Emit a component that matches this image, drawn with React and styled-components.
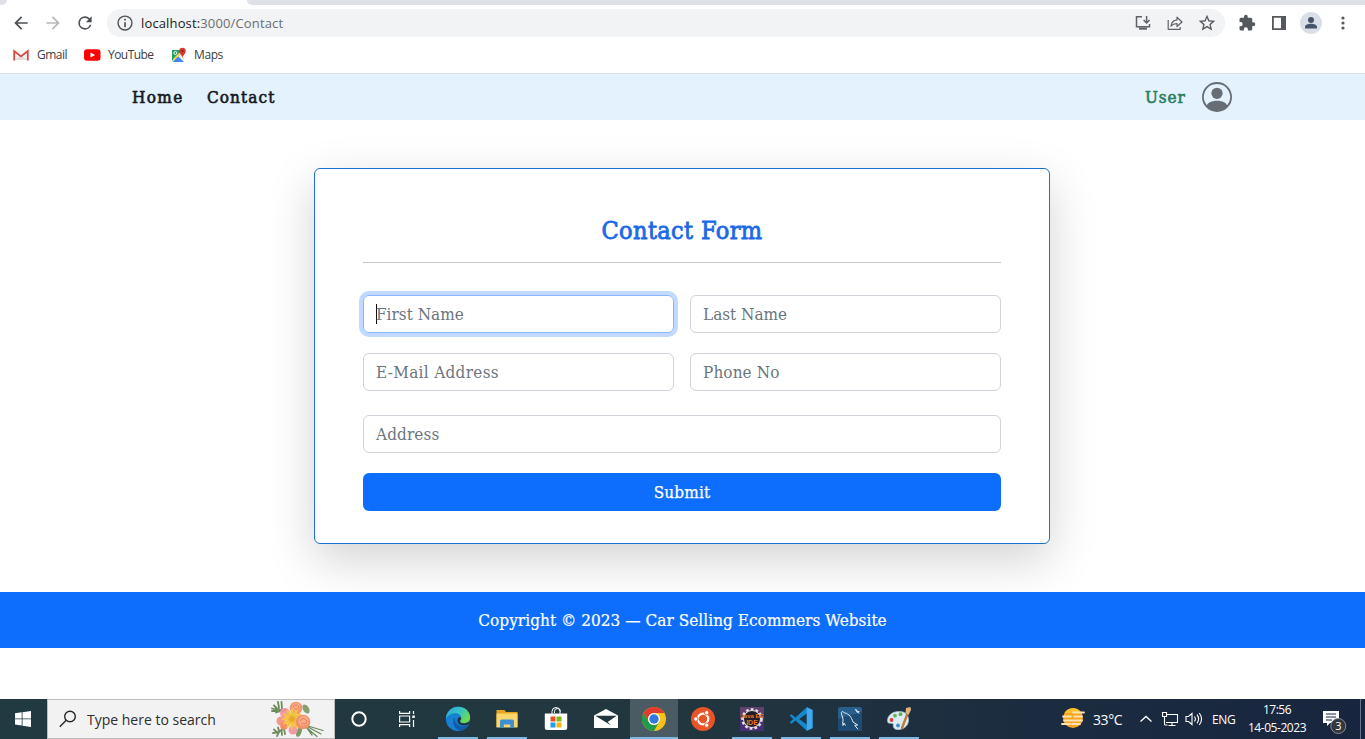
import React from "react";
import styled, { createGlobalStyle } from "styled-components";

const Global = createGlobalStyle`
  *, *::before, *::after { box-sizing: border-box; }
  html, body { margin: 0; height: 100%; overflow: hidden; background: #fff; }
  svg { display: block; flex: none; }
`;

const serif = `"DejaVu Serif Condensed", "DejaVu Serif", serif`;
const sans = `"Open Sans", "Noto Sans", sans-serif`;

/* ---------- layout ---------- */
const Screen = styled.div`
  width: 1365px;
  height: 739px;
  display: flex;
  flex-direction: column;
  overflow: hidden;
  font-family: ${sans};
`;
const Spacer = styled.div`flex: 1;`;

/* Fixes a text run to a given width box so neighbours keep their place. */
const Label = styled.span`
  display: block;
  flex: none;
  white-space: nowrap;
  width: ${(p) => (p.$w ? `${p.$w}px` : "auto")};
  font-size: ${(p) => p.$size || 12}px;
  letter-spacing: ${(p) => p.$track || 0}px;
`;

/* ---------- browser chrome ---------- */
const TabStrip = styled.div`
  height: 5px;
  display: flex;
  justify-content: space-between;
  background: #fff;
`;
const TabLeft = styled.div`
  width: 7px;
  height: 5px;
  background: #dee1e6;
  border-bottom-right-radius: 6px;
`;
const TabRight = styled.div`
  width: 1118px;
  height: 5px;
  background: #dee1e6;
  border-bottom-left-radius: 6px;
`;
const Toolbar = styled.div`
  height: 36px;
  display: flex;
  align-items: center;
  padding-left: 11px;
`;
const NavButtons = styled.div`
  display: flex;
  gap: 12px;
  width: 96px;
`;
const AddressBar = styled.div`
  width: 1118px;
  height: 28px;
  border-radius: 14px;
  background: #f1f3f4;
  display: flex;
  align-items: center;
  padding: 0 8px 0 8px;
  color: #6a6e72;
  b { font-weight: 400; color: #202124; }
`;
const UrlText = styled(Label)`margin-left: 6px;`;
const BarIcons = styled.div`
  display: flex;
  gap: 12px;
`;
const ChromeActions = styled.div`
  display: flex;
  align-items: center;
  gap: 10px;
  padding-left: 13px;
  svg:first-child { margin-right: 2px; }
`;
const Bookmarks = styled.div`
  height: 32px;
  display: flex;
  align-items: center;
  padding: 0 0 4px 12px;
  color: #3c4043;
`;
const Bookmark = styled.div`
  display: flex;
  align-items: center;
  gap: 7px;
  width: ${(p) => p.$w}px;
  ${Label} { padding-bottom: 2px; }
`;

/* ---------- web page ---------- */
const NavBar = styled.nav`
  height: 47px;
  background: #e3f2fd;
  border-top: 1px solid #d3dde6;
  display: flex;
  align-items: center;
  padding: 0 133px 0 132px;
  font-family: ${serif};
  color: #16191c;
`;
const NavLink = styled(Label)`
  color: ${(p) => p.$color || "inherit"};
  -webkit-text-stroke: 0.6px currentColor;
`;
const Main = styled.main`
  height: 472px;
  padding-top: 48px;
  display: flex;
  justify-content: center;
  align-items: flex-start;
  padding-right: 1px;
`;
const Card = styled.form`
  width: 736px;
  height: 376px;
  border: 1px solid #1d6fd0;
  border-radius: 6px;
  background: #fff;
  box-shadow: 0 16px 48px rgba(0, 0, 0, 0.175);
  padding: 42px 48px 32px;
  display: flex;
  flex-direction: column;
`;
const Title = styled.h1`
  margin: 0;
  height: 52px;
  line-height: 39px;
  border-bottom: 1px solid #c8c8c8;
  text-align: center;
  font-family: ${serif};
  font-weight: 400;
  font-size: 25px;
  letter-spacing: 0.4px;
  color: #1c69e8;
  -webkit-text-stroke: 0.8px currentColor;
`;
const Fields = styled.div`
  display: grid;
  grid-template-columns: 311px 311px;
  gap: 20px 16px;
  margin-top: 32px;
`;
const Field = styled.div`
  height: 38px;
  border: 1px solid ${(p) => (p.$focus ? "#86b7fe" : "#ced4da")};
  border-radius: 6px;
  box-shadow: ${(p) => (p.$focus ? "0 0 0 4px #c2daff" : "none")};
  padding: 0 12px;
  display: flex;
  align-items: center;
  font-family: ${serif};
  color: #6c757d;
`;
const Caret = styled.i`
  width: 1px;
  height: 20px;
  background: #111;
  margin-right: -1px;
`;
const Wide = styled.div`margin: 24px 0 20px;`;
const Submit = styled.button`
  height: 38px;
  border: 0;
  border-radius: 6px;
  background: #0d6efd;
  color: #fff;
  display: flex;
  align-items: center;
  justify-content: center;
  font-family: ${serif};
  -webkit-text-stroke: 0.25px currentColor;
`;
const Footer = styled.footer`
  height: 56px;
  background: #0d6efd;
  color: #fff;
  display: flex;
  align-items: center;
  justify-content: center;
  font-family: ${serif};
  -webkit-text-stroke: 0.2px currentColor;
  position: relative;
`;

/* ---------- taskbar ---------- */
const Taskbar = styled.div`
  height: 40px;
  display: flex;
  align-items: stretch;
  background: linear-gradient(90deg, #213a42 0, #22363f 50%, #1b2b40 78%, #17263e 100%);
  color: #fff;
`;
const Start = styled.div`
  width: 47px;
  display: flex;
  align-items: center;
  justify-content: center;
  padding-right: 1px;
`;
const Search = styled.div`
  width: 288px;
  background: #f2f2f2;
  border: 1px solid #bdbdbd;
  display: flex;
  align-items: center;
  padding-left: 11px;
  color: #2e2e2e;
`;
const SearchText = styled(Label)`margin-left: 10px;`;
const AppSlot = styled.div`
  width: ${(p) => p.$w || 49}px;
  display: flex;
  align-items: center;
  justify-content: center;
  background: ${(p) => (p.$active ? "#4a5b63" : "transparent")};
  box-shadow: ${(p) => (p.$active ? "inset 0 -2px #7ab8e8" : "none")};
`;
const AppInner = styled.div`
  width: 40px;
  height: 40px;
  display: flex;
  align-items: center;
  justify-content: center;
  box-shadow: ${(p) => (p.$open ? "inset 0 -2px #7ab8e8" : "none")};
`;
const Tray = styled.div`
  display: flex;
  align-items: center;
  width: 305px;
`;
const TrayItem = styled.div`
  width: ${(p) => p.$w}px;
  display: flex;
  flex: none;
`;
const Clock = styled.div`
  width: 78px;
  margin-right: 6px;
  display: flex;
  flex-direction: column;
  align-items: center;
  line-height: 18px;
`;
const Peek = styled.div`
  height: 40px;
  border-left: 1px solid #68758a;
`;

/* ---------- icons ---------- */
const Svg = ({ w = 20, h, vb = "0 0 24 24", children, ...r }) => (
  <svg width={w} height={h || w} viewBox={vb} fill="none" {...r}>{children}</svg>
);
const Arrow = ({ flip, color }) => (
  <Svg><g transform={flip ? "translate(24 0) scale(-1 1)" : undefined}>
    <path fill={color} d="M20 11H7.83l5.59-5.59L12 4l-8 8 8 8 1.41-1.41L7.83 13H20z" />
  </g></Svg>
);
const Reload = () => (
  <Svg><path fill="#4d5156" d="M17.65 6.35A7.95 7.95 0 0 0 12 4a8 8 0 1 0 7.73 10h-2.08A6 6 0 1 1 12 6c1.66 0 3.14.69 4.22 1.78L13 11h7V4z" /></Svg>
);
const Info = () => (
  <Svg><circle cx="12" cy="12" r="8.3" stroke="#505459" strokeWidth="1.7" /><path fill="#505459" d="M11 7h2v2h-2zM11 11h2v6h-2z" /></Svg>
);
const Install = () => (
  <Svg vb="0 0 20 20" stroke="#5f6368" strokeWidth="1.5"><path d="M9 3.7H3.5v10h13V11M13.6 3v6.5M10.6 7l3 3 3-3" /><path d="M6 15.6h8" strokeWidth="2.2" /></Svg>
);
const Share = () => (
  <Svg vb="0 0 20 20" stroke="#5f6368" strokeWidth="1.2" strokeLinejoin="round"><path d="M3.2 7v9.3h12V14M6 13.2c.4-4 2.8-6 6-6.3V4.2L17 9l-5 4.5v-2.8c-2.600-.1-4.400.7-6 2.500z" /></Svg>
);
const Star = () => (
  <Svg><path fill="#55595e" d="m22 9.240-7.190-.62L12 2 9.190 8.630 2 9.240l5.460 4.730L5.820 21 12 17.270 18.180 21l-1.630-7.030zM12 15.400l-3.760 2.270 1-4.280-3.320-2.880 4.380-.38L12 6.100l1.710 4.040 4.380.38-3.320 2.880 1 4.280z" /></Svg>
);
const Puzzle = () => (
  <Svg w={18}><path fill="#55595e" d="M20.500 11H19V7a2 2 0 0 0-2-2h-4V3.500a2.500 2.500 0 0 0-5 0V5H4a2 2 0 0 0-2 2v3.800h1.500a2.700 2.700 0 0 1 0 5.400H2V20a2 2 0 0 0 2 2h3.800v-1.500a2.700 2.700 0 0 1 5.400 0V22H17a2 2 0 0 0 2-2v-4h1.500a2.500 2.500 0 0 0 0-5z" /></Svg>
);
const SidePanel = () => (
  <Svg w={22} vb="0 0 22 22"><path fill="#55595e" d="M4 4h14v14H4zM5.800 5.800v10.400H13V5.800z" fillRule="evenodd" /></Svg>
);
const Profile = () => (
  <Svg w={22} vb="0 0 22 22"><circle cx="11" cy="11" r="11" fill="#dadfe7" /><circle cx="11" cy="8" r="3" fill="#46546b" /><path fill="#46546b" d="M5 16.500v-1.500c0-2 3-3.200 6-3.200s6 1.200 6 3.200v1.500z" /></Svg>
);
const Dots = () => (
  <Svg w={22} vb="0 0 22 22"><circle cx="11" cy="6" r="1.600" fill="#55595e" /><circle cx="11" cy="11" r="1.600" fill="#55595e" /><circle cx="11" cy="16" r="1.600" fill="#55595e" /></Svg>
);
const Gmail = () => (
  <Svg w={18} h={16} vb="0 0 18 16"><path fill="#f4f2f2" d="M2 3h14v10H2z" /><path d="m3 13 4.500-4h3l4.500 4" fill="#e4dddc" /><path d="M2.200 13.500V4l6.800 5.400L15.800 4v9.500" stroke="#d5493f" strokeWidth="1.800" /></Svg>
);
const YouTube = () => (
  <Svg w={17} h={16} vb="0 0 17 16"><rect x="0" y="2.200" width="16.500" height="11.600" rx="3" fill="#f00" /><path fill="#fff" d="m6.500 5.400 4.700 2.600-4.700 2.600z" /></Svg>
);
const MapsIcon = () => (
  <Svg w={16} h={16} vb="0 0 16 16"><path fill="#1fa463" d="M1 3h11L1 14z" /><path fill="#e8eaed" d="m9 6 4 2v7L5.500 9.500z" /><path fill="#fbd24d" d="m2 12 6-6 1.500 1.500L3 14z" /><path fill="#4285f4" d="m1.500 15 5.700-5.500L13 15z" /><circle cx="4.300" cy="6" r="1.500" stroke="#fff" strokeWidth=".9" /><path fill="#d8392e" d="M11.500 10.500C11 8 8.300 7 8.300 4a3.200 3.200 0 0 1 6.400 0c0 3-2.700 4-3.200 6.500z" /><circle cx="11.500" cy="4" r="1.100" fill="#8d1d16" /></Svg>
);
const UserCircle = () => (
  <Svg w={30} vb="0 0 16 16"><path fill="#666d75" d="M11 6a3 3 0 1 1-6 0 3 3 0 0 1 6 0" /><path fill="#666d75" fillRule="evenodd" d="M0 8a8 8 0 1 1 16 0A8 8 0 0 1 0 8m8-7a7 7 0 0 0-5.468 11.370C3.242 11.226 4.805 10 8 10s4.757 1.225 5.468 2.370A7 7 0 0 0 8 1" /></Svg>
);
const Windows = () => (
  <Svg w={16} vb="0 0 16 16"><path fill="#fff" d="m0 2.200 6.700-.9v6.200H0zM7.500 1.200 16 0v7.500H7.500zM0 8.300h6.700v6.200L0 13.600zM7.500 8.300H16V16l-8.500-1.200z" /></Svg>
);
const Magnifier = () => (
  <Svg w={18} vb="0 0 18 18" stroke="#252525" strokeWidth="1.400"><circle cx="11" cy="6.500" r="5.300" /><path d="m7.200 10.300-6.400 6.400" /></Svg>
);
const petals = [0, 30, 60, 90, 120, 150, 180, 210, 240, 270, 300, 330];
const Flowers = () => (
  <Svg w={54} h={38} vb="0 0 54 38">
    <g stroke="#6d8b5c" strokeWidth="1.800" strokeLinecap="round">
      <path d="M2 8.500c5 1.500 8 .5 12 3M4 5.500l3 3M8 2l1 6M11.500 2l.5 7M2 11h5M6 12.500l5-1.500" />
      <path d="M3 33c5 0 9-3 12-6M4 29.500l3 3M8 27.500l1 3.500M7 36l2-4M12 35l-.5-5M15 34l-1-5" />
      <path d="m38 26 15 4.500M38 27l13 7M37 28l10 8.500M37 28l5 7" strokeWidth="1.300" />
    </g>
    <ellipse cx="29" cy="32" rx="2.500" ry="5" fill="#7c9a67" transform="rotate(20 29 32)" />
    <ellipse cx="36" cy="9" rx="3" ry="5" fill="#88a06d" transform="rotate(-30 36 9)" />
    <circle cx="15" cy="13" r="5" fill="#f39aa9" /><path d="M12 12q3-4 6 0" stroke="#e98094" />
    <circle cx="11" cy="21" r="4.500" fill="#f4978a" /><circle cx="14" cy="26" r="3.800" fill="#f28b6b" />
    <circle cx="26" cy="8" r="6.300" fill="#f3946c" /><circle cx="26" cy="7" r="4" fill="#f8ab88" /><path d="M23 7q3-4 6 0-2 4-5 1" stroke="#ea825b" />
    <circle cx="23" cy="30" r="4.500" fill="#f39aa9" />
    <g fill="#f5c342">{petals.map((a) => <ellipse key={a} cx="22" cy="14" rx="1.500" ry="5.500" transform={`rotate(${a} 22 19)`} />)}</g>
    <g fill="#e9a62d">{petals.map((a) => <ellipse key={a} cx="22" cy="17" rx=".5" ry="2" transform={`rotate(${a + 15} 22 19)`} />)}</g>
    <circle cx="33" cy="22" r="7.300" fill="#f1916a" /><circle cx="33.500" cy="21" r="5" fill="#f8ad88" /><path d="M30 21q3-5 7 0-1 5-6 2" stroke="#e57d57" />
  </Svg>
);
const Cortana = () => <Svg w={18} vb="0 0 18 18"><circle cx="9" cy="9" r="6.700" stroke="#fff" strokeWidth="2" /></Svg>;
const TaskView = () => (
  <Svg w={18} vb="0 0 18 18" stroke="#fff" strokeWidth="1.200"><path d="M1.600 1v2.400h10V1M1.600 17v-2.400h10V17M1.600 6h10v6h-10zM15.500 1v3M15.500 10v7" /><path d="M14.300 5.500h2.500v2.500h-2.500z" fill="#fff" stroke="none" /></Svg>
);
const Edge = () => (
  <Svg w={26} vb="0 0 24 24">
    <defs><linearGradient id="eg" x1="0" y1="0" x2="1" y2=".6"><stop stopColor="#2ca5df" /><stop offset=".55" stopColor="#36c5c2" /><stop offset="1" stopColor="#6fdb4b" /></linearGradient></defs>
    <circle cx="12" cy="12" r="11.200" fill="#1681d3" />
    <path fill="url(#eg)" d="M.8 11.500C1.300 5.300 6.200.8 12.200.8c6.300 0 11 4.500 11 9.500 0 3.500-2.700 5.500-5.800 5.500-2.600 0-3.600-1-3.600-1.700 0-.9 1.200-1.300 1.200-3 0-2.400-2.300-4.300-5.200-4.300C6 6.800 2.500 8.500.8 11.500z" />
    <path fill="#0f5ba9" d="M9 10.300c-3 3.500-.7 11.700 5.500 12.700 3-.7 5.500-2.600 7-5.200-5 2.600-13 .5-12.500-7.500z" />
    <path fill="#22363f" d="M15 11c0 1.700-1.200 2.200-1.200 3 0 1 1.600 1.900 4 1.900 2.500 0 4-.9 5-2.300l-.4 2.900c-5 3-11 1.200-11-3 0-2.200 1.700-4.500 3.600-2.500z" />
  </Svg>
);
const Explorer = () => (
  <Svg w={24} vb="0 0 24 24"><path fill="#e7a51e" d="M1.500 3h8l1.500 2h11.500v15h-21z" /><path fill="#fbd66d" d="M1.500 6.500h21V20.500h-21z" /><path fill="#3d8fd1" d="M5 21v-7q0-1.500 1.500-1.500h11Q19 12.500 19 14v7h-3.800v-3.500H8.800V21z" /></Svg>
);
const Store = () => (
  <Svg w={24} vb="0 0 24 24"><path d="M8 7V4.500a4 4 0 0 1 8 0V7M10.500 6V4.500a3 3 0 0 1 6 0" stroke="#fff" /><path fill="#fff" d="M.8 6.500h22.400V21a2 2 0 0 1-2 2H2.800a2 2 0 0 1-2-2z" /><path fill="#e84f22" d="M6.500 9.500h5v5h-5z" /><path fill="#7fb817" d="M12.500 9.500h5v5h-5z" /><path fill="#1ba0e8" d="M6.500 15.500h5v5h-5z" /><path fill="#f9b50d" d="M12.500 15.500h5v5h-5z" /></Svg>
);
const Mail = () => (
  <Svg w={24} vb="0 0 24 24"><path fill="#fff" d="M0 8.500 12 2l12 6.500V21H0z" /><path fill="#22363f" d="M1.300 8.700h21.400l-9 6.300 3.500 3.500z" /></Svg>
);
const Chrome = () => (
  <Svg w={24} vb="0 0 24 24"><circle cx="12" cy="12" r="12" fill="#fbc116" /><path fill="#e33b2e" d="M1.600 6A12 12 0 0 1 22.400 6H12a6 6 0 0 0-5.200 9z" /><path fill="#229a4b" d="M1.600 6A12 12 0 0 0 12 24l5.200-9a6 6 0 0 1-10.400 0z" /><circle cx="12" cy="12" r="6" fill="#fff" /><circle cx="12" cy="12" r="4.700" fill="#3378e2" /></Svg>
);
const Ubuntu = () => (
  <Svg w={24} vb="0 0 24 24"><circle cx="12" cy="12" r="12" fill="#e65427" /><circle cx="12" cy="12" r="5.300" stroke="#fff" strokeWidth="2.300" /><g stroke="#e65427" strokeWidth="1" fill="#fff"><circle cx="4.900" cy="12" r="2.200" /><circle cx="15.700" cy="5.800" r="2.200" /><circle cx="15.700" cy="18.200" r="2.200" /></g></Svg>
);
const JavaEE = () => (
  <Svg w={24} vb="0 0 24 24"><path fill="#60406f" d="M0 0h24v24H0z" /><path fill="#472f73" d="M0 12h24v12H0z" /><circle cx="12" cy="12" r="9.300" stroke="#e6e0e2" strokeWidth="3" strokeDasharray="2.700 2" /><circle cx="12" cy="12" r="8.500" fill="#241c2b" stroke="#e6e0e2" /><g fill="#e67825" fontFamily="Liberation Sans" fontWeight="700" textAnchor="middle"><text x="12" y="11" fontSize="6">Java EE</text><text x="12" y="18" fontSize="7">IDE</text></g></Svg>
);
const Code = () => (
  <Svg w={24} vb="0 0 24 24"><path fill="#1688cc" d="M17.800.2 23.500 3v18l-5.700 2.800L6.500 13.500 2.500 16.700.5 15.500 4.300 12 .5 8.500 2.500 7.300l4 3.200zM17.800 6.500 10.200 12l7.600 5.500z" fillRule="evenodd" /><path fill="#42a9ee" d="M17.800.2 23.500 3v18l-5.700 2.800z" /></Svg>
);
const MySql = () => (
  <Svg w={24} vb="0 0 24 24"><rect width="24" height="24" rx="2.500" fill="#285f8c" /><path fill="#1e4b74" d="M0 12 24 5v19H0z" /><path stroke="#e6eef5" strokeWidth="1" d="M7.500 18.500 6 16l-1 2.500c-1-3 .8-5-.3-7.500C4 8 2.500 5.200 4 4.700c1-.4 1.700 1 3 1.300 4 .6 6.500 4.500 8 9l4.700 3-3 .3 3.300 4" /><path fill="#e6eef5" d="m16.500 2 2 .5 1 1.500 2.500.5-1.500.8 1.500 1.700-3-1.500z" /></Svg>
);
const Paint = () => (
  <Svg w={26} vb="0 0 26 26"><path fill="#dcebf4" stroke="#a4bfd1" strokeWidth=".7" d="M14 5.500C6 5 1 10 1.500 15.500c.4 2.500 3 1.700 4.800 1.900 2 .4 0 3 2 5 3.500 3 13.500.5 14.200-7.400C23 9 20 6 14 5.500z" /><circle cx="5.500" cy="14" r="1.900" fill="#d83b36" /><circle cx="9" cy="9.700" r="1.900" fill="#6cb65a" /><circle cx="14.500" cy="8.200" r="1.900" fill="#5fae55" /><circle cx="12" cy="19.500" r="1.900" fill="#398fcf" /><path stroke="#c07a32" strokeWidth="2.400" strokeLinecap="round" d="m21 9-5 13" /><path fill="#e2b377" d="m19.500 7 .5-5 4.500-1 .5 3-2.500 5z" /></Svg>
);
const Weather = () => (
  <Svg w={26} vb="0 0 26 26"><circle cx="13" cy="12" r="10" fill="#f6a51c" /><path d="M4.500 7a10 10 0 0 1 17 0z" fill="#fdc12b" /><g strokeWidth="1.800" stroke="#fbe3b6" strokeLinecap="round"><path d="M13 6.500h11M3 10.500h8M14 10.500h8M4 14.500h18M2 18h8M12 18h8" /></g></Svg>
);
const Chevron = () => <Svg w={12} vb="0 0 12 12" stroke="#fff" strokeWidth="1.300"><path d="m.5 8.500 5.500-5 5.500 5" /></Svg>;
const Network = () => <Svg w={18} h={16} vb="0 0 18 16" stroke="#fff" strokeWidth="1.100"><path d="M5.500 3.500h11v8H5M11 12v2.500M7.500 14.500h7M1.500 1.500h4v4h-4zM3.500 5.500v8.500M3.500 14h3" /></Svg>;
const Volume = () => <Svg w={18} h={16} vb="0 0 18 16" stroke="#fff" strokeWidth="1.100"><path d="M1 5.500h2.500L7 2.500v11l-3.500-3H1zM9.500 5.500q1.800 2.500 0 5M12 3.700q3.200 4.300 0 8.600M14.300 2q4.500 6 0 12" /></Svg>;
const Notices = () => (
  <Svg w={26} vb="0 0 26 26"><path fill="#fff" d="M1 5h16v12H8l-3 3v-3H1z" /><path d="M4 8h10M4 11h10M4 14h6" stroke="#17263e" /><circle cx="16.300" cy="20" r="7.500" fill="#34383e" stroke="#85898e" /><text x="16.300" y="24" textAnchor="middle" fill="#fff" fontFamily="Open Sans" fontSize="11">3</text></Svg>
);
const NoticeItem = styled(TrayItem)`svg { overflow: visible; }`;

const apps = [
  { Icon: Cortana, w: 47 }, { Icon: TaskView, w: 50 }, { Icon: Edge, open: true, w: 52 },
  { Icon: Explorer, open: true, w: 46 }, { Icon: Store, w: 51 }, { Icon: Mail },
  { Icon: Chrome, active: true, w: 48 }, { Icon: Ubuntu, w: 50 }, { Icon: JavaEE, open: true, w: 48 },
  { Icon: Code, open: true, w: 50 }, { Icon: MySql, open: true, w: 48 }, { Icon: Paint, open: true, w: 50 },
];

export default function App() {
  return (
    <Screen>
      <Global />
      <TabStrip><TabLeft /><TabRight /></TabStrip>
      <Toolbar>
        <NavButtons><Arrow color="#4d5156" /><Arrow flip color="#b6b8bb" /><Reload /></NavButtons>
        <AddressBar>
          <Info />
          <UrlText $size={13} $track={0.14}><b>localhost:</b>3000/Contact</UrlText>
          <Spacer />
          <BarIcons><Install /><Share /><Star /></BarIcons>
        </AddressBar>
        <ChromeActions><Puzzle /><SidePanel /><Profile /><Dots /></ChromeActions>
      </Toolbar>
      <Bookmarks>
        <Bookmark $w={72}><Gmail /><Label $track={-0.5}>Gmail</Label></Bookmark>
        <Bookmark $w={87}><YouTube /><Label $track={-0.55}>YouTube</Label></Bookmark>
        <Bookmark $w={60}><MapsIcon /><Label $track={-0.4}>Maps</Label></Bookmark>
      </Bookmarks>
      <NavBar>
        <NavLink $w={75} $size={17} $track={1.4}>Home</NavLink>
        <NavLink $size={17} $track={1.1}>Contact</NavLink>
        <Spacer />
        <NavLink $w={57} $size={17} $track={0.9} $color="#2a7f5c">User</NavLink>
        <UserCircle />
      </NavBar>
      <Main>
        <Card>
          <Title>Contact Form</Title>
          <Fields>
            <Field $focus><Caret /><Label $size={17}>First Name</Label></Field>
            <Field><Label $size={17}>Last Name</Label></Field>
            <Field><Label $size={17} $track={0.3}>E-Mail Address</Label></Field>
            <Field><Label $size={17} $track={0.1}>Phone No</Label></Field>
          </Fields>
          <Wide><Field><Label $size={17} $track={0.1}>Address</Label></Field></Wide>
          <Submit type="button"><Label $size={17} $track={0.15}>Submit</Label></Submit>
        </Card>
      </Main>
      <Footer><Label $size={17} $track={0.05}>Copyright © 2023 — Car Selling Ecommers Website</Label></Footer>
      <Spacer />
      <Taskbar>
        <Start><Windows /></Start>
        <Search><Magnifier /><SearchText $w={183} $size={14}>Type here to search</SearchText><Flowers /></Search>
        {apps.map(({ Icon, w, open, active }, i) => (
          <AppSlot key={i} $w={w} $active={active}><AppInner $open={open}><Icon /></AppInner></AppSlot>
        ))}
        <Spacer />
        <Tray>
          <TrayItem $w={33}><Weather /></TrayItem>
          <Label $w={47} $size={14} $track={-0.4}>33°C</Label>
          <TrayItem $w={21}><Chevron /></TrayItem>
          <TrayItem $w={24}><Network /></TrayItem>
          <TrayItem $w={27}><Volume /></TrayItem>
          <Label $w={26} $size={12} $track={-0.4}>ENG</Label>
          <Clock><Label $size={12} $track={-0.5}>17:56</Label><Label $size={12} $track={-0.45}>14-05-2023</Label></Clock>
          <NoticeItem $w={38}><Notices /></NoticeItem>
          <Peek />
        </Tray>
      </Taskbar>
    </Screen>
  );
}
